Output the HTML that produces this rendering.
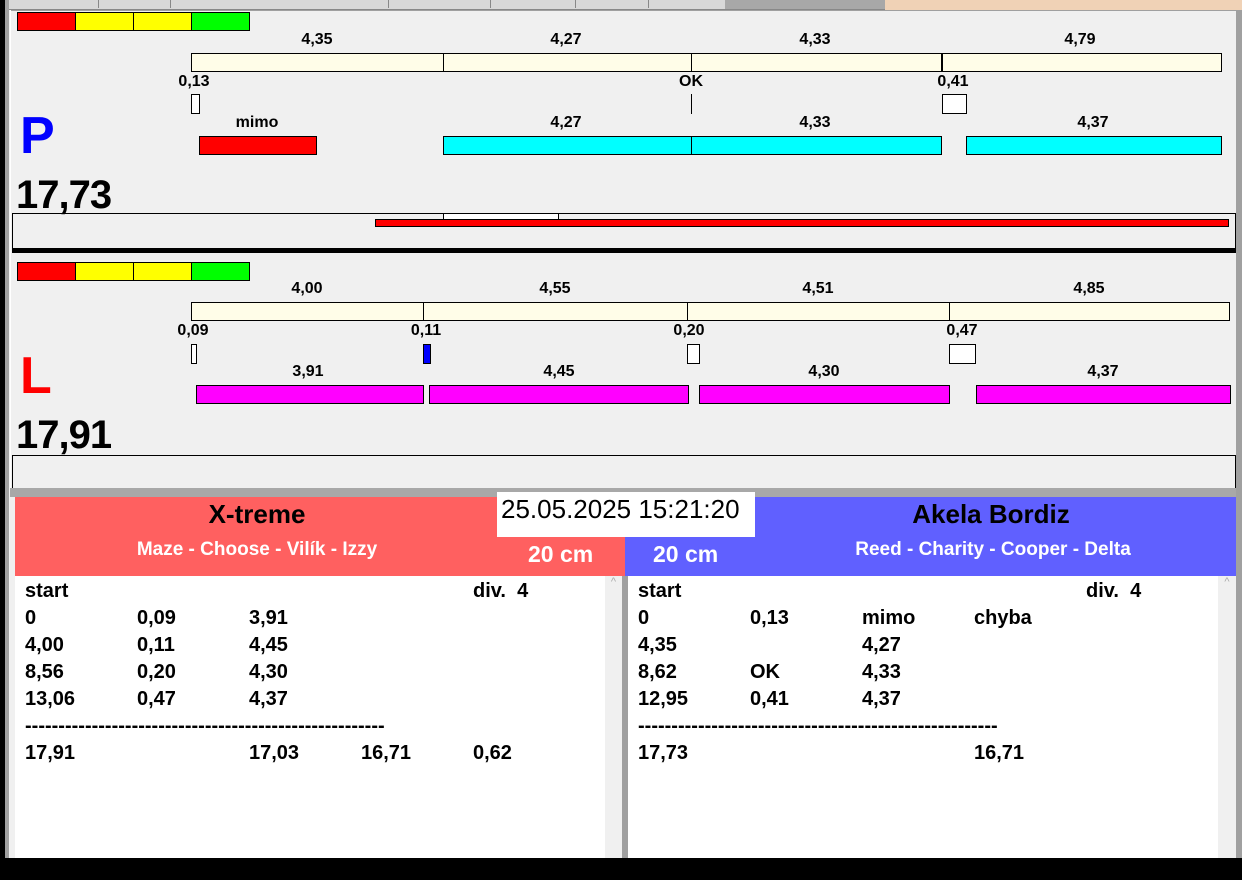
<!DOCTYPE html>
<html><head><meta charset="utf-8"><style>
*{margin:0;padding:0;box-sizing:border-box}
body{width:1242px;height:880px;overflow:hidden;background:#f0f0f0;position:relative;font-family:"Liberation Sans",Arial,sans-serif}
div{position:absolute}
.t{font-weight:bold;font-size:16px;color:#000;transform:translateX(-50%);white-space:nowrap;line-height:16px}
.b{border:1px solid #000}
.tb{font-weight:bold;font-size:20px;line-height:27px;white-space:pre;color:#000}
</style></head><body>
<div style="left:0;top:0;width:885px;height:10px;background:#d8d8d8;border-bottom:1px solid #888"></div>
<div style="left:885px;top:0;width:357px;height:11px;background:#f0d2b6"></div>
<div style="left:98px;top:0;width:1px;height:8px;background:#888"></div>
<div style="left:170px;top:0;width:1px;height:8px;background:#888"></div>
<div style="left:388px;top:0;width:1px;height:8px;background:#888"></div>
<div style="left:490px;top:0;width:1px;height:8px;background:#888"></div>
<div style="left:575px;top:0;width:1px;height:8px;background:#888"></div>
<div style="left:648px;top:0;width:1px;height:8px;background:#888"></div>
<div style="left:725px;top:0;width:160px;height:9px;background:#a8a8a8"></div>
<div style="left:0;top:0;width:5px;height:880px;background:#000"></div>
<div style="left:5px;top:0;width:4px;height:860px;background:#a0a0a0"></div>
<div style="left:1236px;top:10px;width:6px;height:850px;background:#a0a0a0"></div>
<div style="left:10px;top:10px;width:1226px;height:1px;background:#a0a0a0"></div>
<div style="left:10px;top:10px;width:1px;height:480px;background:#fff"></div>

<div class="b" style="left:17px;top:12px;width:59px;height:19px;background:#f00"></div>
<div class="b" style="left:75px;top:12px;width:59px;height:19px;background:#ff0"></div>
<div class="b" style="left:133px;top:12px;width:59px;height:19px;background:#ff0"></div>
<div class="b" style="left:191px;top:12px;width:59px;height:19px;background:#0f0"></div>
<div class="t" style="left:317px;top:32px">4,35</div>
<div class="t" style="left:566px;top:32px">4,27</div>
<div class="t" style="left:815px;top:32px">4,33</div>
<div class="t" style="left:1080px;top:32px">4,79</div>
<div class="b" style="left:191px;top:53px;width:1031px;height:19px;background:#fffde8"></div>
<div style="left:443px;top:53px;width:1px;height:19px;background:#000"></div>
<div style="left:691px;top:53px;width:1px;height:19px;background:#000"></div>
<div style="left:941px;top:53px;width:2px;height:19px;background:#000"></div>
<div class="t" style="left:194px;top:74px">0,13</div>
<div class="t" style="left:691px;top:74px">OK</div>
<div class="t" style="left:953px;top:74px">0,41</div>
<div class="b" style="left:191px;top:94px;width:9px;height:20px;background:#fff"></div>
<div style="left:691px;top:94px;width:1px;height:20px;background:#000"></div>
<div class="b" style="left:942px;top:94px;width:25px;height:20px;background:#fff"></div>
<div class="t" style="left:257px;top:115px">mimo</div>
<div class="t" style="left:566px;top:115px">4,27</div>
<div class="t" style="left:815px;top:115px">4,33</div>
<div class="t" style="left:1093px;top:115px">4,37</div>
<div class="b" style="left:199px;top:136px;width:118px;height:19px;background:#f00"></div>
<div class="b" style="left:443px;top:136px;width:499px;height:19px;background:#0ff"></div>
<div style="left:691px;top:136px;width:1px;height:19px;background:#000"></div>
<div class="b" style="left:966px;top:136px;width:256px;height:19px;background:#0ff"></div>
<div style="left:20px;top:106px;font-size:52px;font-weight:bold;color:#0000ff;line-height:60px">P</div>
<div style="left:16px;top:173px;font-size:40px;font-weight:bold;line-height:44px;letter-spacing:-1px">17,73</div>
<div style="left:12px;top:213px;width:1224px;height:36px;border:1px solid #000;border-bottom:none"></div>
<div class="b" style="left:443px;top:213px;width:116px;height:7px;background:#fff"></div>
<div class="b" style="left:375px;top:219px;width:854px;height:8px;background:#f00"></div>
<div style="left:12px;top:248px;width:1224px;height:5px;background:#000"></div>

<div class="b" style="left:17px;top:262px;width:59px;height:19px;background:#f00"></div>
<div class="b" style="left:75px;top:262px;width:59px;height:19px;background:#ff0"></div>
<div class="b" style="left:133px;top:262px;width:59px;height:19px;background:#ff0"></div>
<div class="b" style="left:191px;top:262px;width:59px;height:19px;background:#0f0"></div>
<div class="t" style="left:307px;top:281px">4,00</div>
<div class="t" style="left:555px;top:281px">4,55</div>
<div class="t" style="left:818px;top:281px">4,51</div>
<div class="t" style="left:1089px;top:281px">4,85</div>
<div class="b" style="left:191px;top:302px;width:1039px;height:19px;background:#fffde8"></div>
<div style="left:423px;top:302px;width:1px;height:19px;background:#000"></div>
<div style="left:687px;top:302px;width:1px;height:19px;background:#000"></div>
<div style="left:949px;top:302px;width:1px;height:19px;background:#000"></div>
<div class="t" style="left:193px;top:323px">0,09</div>
<div class="t" style="left:426px;top:323px">0,11</div>
<div class="t" style="left:689px;top:323px">0,20</div>
<div class="t" style="left:962px;top:323px">0,47</div>
<div class="b" style="left:191px;top:344px;width:6px;height:20px;background:#fff"></div>
<div class="b" style="left:423px;top:344px;width:8px;height:20px;background:#00f"></div>
<div class="b" style="left:687px;top:344px;width:13px;height:20px;background:#fff"></div>
<div class="b" style="left:949px;top:344px;width:27px;height:20px;background:#fff"></div>
<div class="t" style="left:308px;top:364px">3,91</div>
<div class="t" style="left:559px;top:364px">4,45</div>
<div class="t" style="left:824px;top:364px">4,30</div>
<div class="t" style="left:1103px;top:364px">4,37</div>
<div class="b" style="left:196px;top:385px;width:228px;height:19px;background:#f0f"></div>
<div class="b" style="left:429px;top:385px;width:260px;height:19px;background:#f0f"></div>
<div class="b" style="left:699px;top:385px;width:251px;height:19px;background:#f0f"></div>
<div class="b" style="left:976px;top:385px;width:255px;height:19px;background:#f0f"></div>
<div style="left:20px;top:346px;font-size:52px;font-weight:bold;color:#f00;line-height:60px">L</div>
<div style="left:16px;top:413px;font-size:40px;font-weight:bold;line-height:44px;letter-spacing:-1px">17,91</div>
<div style="left:12px;top:455px;width:1224px;height:34px;border:1px solid #000;border-bottom:none"></div>
<div style="left:10px;top:488px;width:1226px;height:9px;background:#a8a8a8"></div>

<div style="left:15px;top:497px;width:610px;height:79px;background:#ff6060"></div>
<div style="left:625px;top:497px;width:611px;height:79px;background:#6060ff"></div>
<div style="left:257px;top:499px;transform:translateX(-50%);font-size:26px;font-weight:bold;line-height:30px">X-treme</div>
<div style="left:257px;top:539px;transform:translateX(-50%);font-size:19px;font-weight:bold;color:#fff;white-space:nowrap;line-height:22px">Maze - Choose - Vilík - Izzy</div>
<div style="left:528px;top:540px;font-size:23px;font-weight:bold;color:#fff;line-height:28px">20 cm</div>
<div style="left:991px;top:499px;transform:translateX(-50%);font-size:26px;font-weight:bold;line-height:30px;white-space:nowrap">Akela Bordiz</div>
<div style="left:993px;top:539px;transform:translateX(-50%);font-size:19px;font-weight:bold;color:#fff;white-space:nowrap;line-height:22px">Reed - Charity - Cooper - Delta</div>
<div style="left:653px;top:540px;font-size:23px;font-weight:bold;color:#fff;line-height:28px">20 cm</div>
<div style="left:497px;top:492px;width:258px;height:45px;background:#fff;font-size:26px;line-height:34px;padding-left:4px;white-space:nowrap">25.05.2025 15:21:20</div>

<div style="left:15px;top:576px;width:590px;height:282px;background:#fff"></div>
<div style="left:605px;top:576px;width:17px;height:282px;background:#f0f0f0;color:#aaa;font-size:11px;text-align:center">^</div>
<div style="left:622px;top:576px;width:6px;height:282px;background:#a0a0a0"></div>
<div style="left:628px;top:576px;width:590px;height:282px;background:#fff"></div>
<div style="left:1218px;top:576px;width:18px;height:282px;background:#f0f0f0;color:#aaa;font-size:11px;text-align:center">^</div>
<div style="left:0;top:858px;width:1242px;height:22px;background:#000"></div>

<div class="tb" style="left:25px;top:578px">start</div>
<div class="tb" style="left:473px;top:578px">div.  4</div>
<div class="tb" style="left:25px;top:605px">0
4,00
8,56
13,06
------------------------------------------------------
17,91</div>
<div class="tb" style="left:137px;top:605px">0,09
0,11
0,20
0,47</div>
<div class="tb" style="left:249px;top:605px">3,91
4,45
4,30
4,37

17,03</div>
<div class="tb" style="left:361px;top:740px">16,71</div>
<div class="tb" style="left:473px;top:740px">0,62</div>

<div class="tb" style="left:638px;top:578px">start</div>
<div class="tb" style="left:1086px;top:578px">div.  4</div>
<div class="tb" style="left:638px;top:605px">0
4,35
8,62
12,95
------------------------------------------------------
17,73</div>
<div class="tb" style="left:750px;top:605px">0,13

OK
0,41</div>
<div class="tb" style="left:862px;top:605px">mimo
4,27
4,33
4,37</div>
<div class="tb" style="left:974px;top:605px">chyba</div>
<div class="tb" style="left:974px;top:740px">16,71</div>
</body></html>
